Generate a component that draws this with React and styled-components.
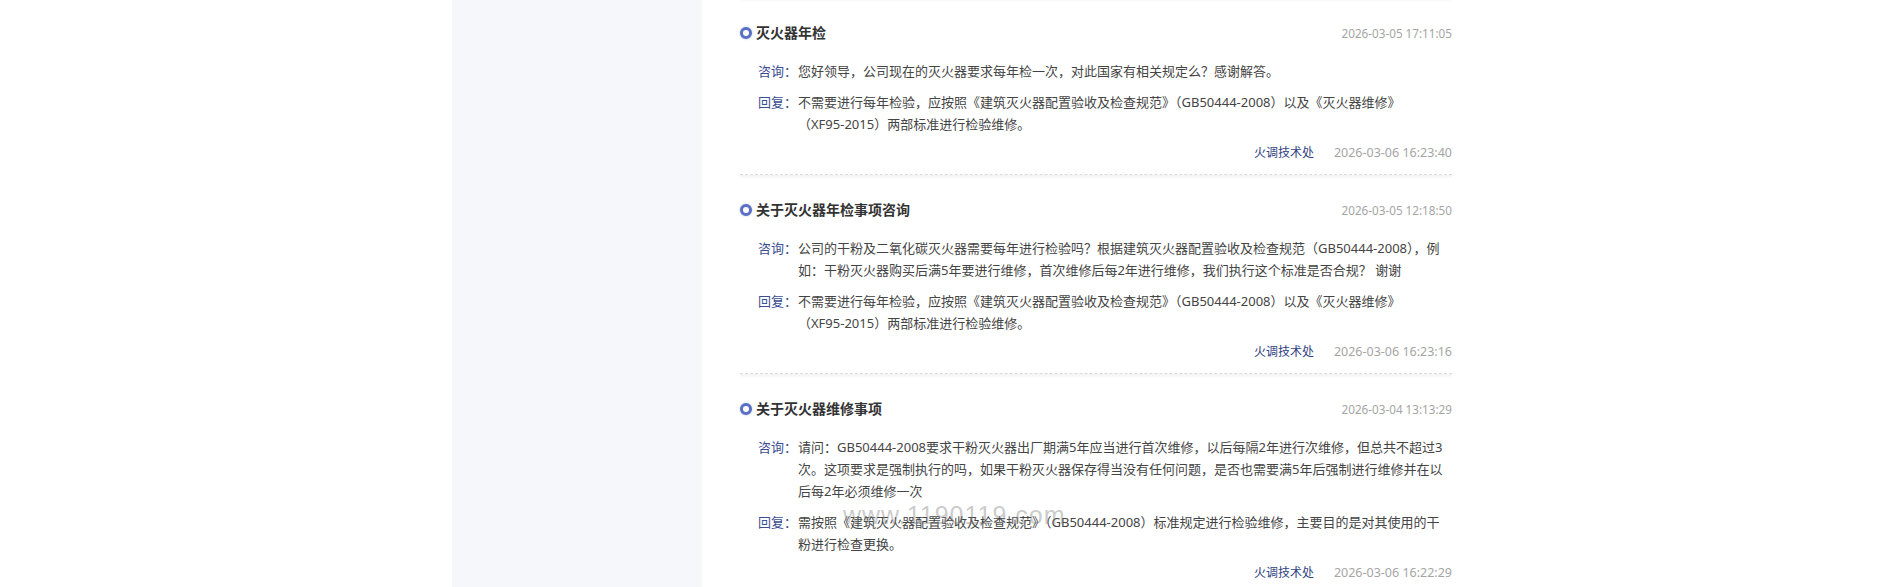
import React from 'react';
import styled, { createGlobalStyle } from 'styled-components';

const GlobalStyle = createGlobalStyle`
  html, body {
    margin: 0;
    padding: 0;
    background: #fff;
    font-family: "Noto Sans", "Noto Sans CJK SC", sans-serif;
  }
`;

const Page = styled.div`
  display: flex;
  min-height: 587px;
  height: 100vh;
  overflow: hidden;
`;

const Blank = styled.div`
  width: 452px;
  flex: none;
`;

const Sidebar = styled.aside`
  width: 250px;
  flex: none;
  background: #f5f7fa;
`;

const Main = styled.main`
  width: 712px;
  flex: none;
  padding-left: 38px;
`;

const List = styled.div`
  margin-top: -3px;
`;

const Item = styled.section`
  position: relative;
  border-top: 1px dashed #dcdcdc;
  background: linear-gradient(#f2f2f2, #fff 4px);
  padding: 24px 0 10px;
`;

const Header = styled.div`
  display: flex;
  justify-content: space-between;
  align-items: center;
  line-height: 22px;
`;

const Title = styled.h3`
  display: flex;
  align-items: center;
  margin: 0;
  font-size: 14px;
  font-weight: bold;
  color: #333;
`;

const Dot = styled.span`
  width: 6px;
  height: 6px;
  border: 3px solid #5b70c4;
  border-radius: 50%;
  background: #fff;
  box-shadow: 0 0 2px rgba(91, 112, 196, 0.5);
  margin-right: 4px;
`;

const Time = styled.span`
  font-size: ${(p) => (p.$reply ? '12.5px' : '11.7px')};
  color: #a5a5a5;
`;

const Body = styled.div`
  display: flex;
  flex-direction: column;
  gap: 9px;
  margin-top: 16px;
`;

const Row = styled.div`
  display: flex;
  padding-left: 18px;
  font-size: 13px;
  line-height: 22px;
`;

const Label = styled.span`
  width: 40px;
  flex: none;
  color: #3b4d93;
`;

const Text = styled.p`
  flex: 1;
  margin: 0;
  color: #444;
`;

const Footer = styled.div`
  display: flex;
  justify-content: flex-end;
  align-items: center;
  gap: 20px;
  margin-top: 7px;
  line-height: 22px;
`;

const Author = styled.span`
  font-size: 12px;
  color: #2f3f82;
`;

const Watermark = styled.span`
  position: absolute;
  left: 103px;
  top: 126px;
  font-family: "Liberation Sans", Arial, sans-serif;
  font-size: 25px;
  line-height: 30px;
  letter-spacing: 1px;
  color: rgba(120, 120, 120, 0.4);
  pointer-events: none;
`;

const items = [
  {
    title: '灭火器年检',
    time: '2026-03-05 17:11:05',
    ask: ['您好领导，公司现在的灭火器要求每年检一次，对此国家有相关规定么？感谢解答。'],
    reply: [
      '不需要进行每年检验，应按照《建筑灭火器配置验收及检查规范》（GB50444-2008）以及《灭火器维修》',
      '（XF95-2015）两部标准进行检验维修。',
    ],
    replyTime: '2026-03-06 16:23:40',
  },
  {
    title: '关于灭火器年检事项咨询',
    time: '2026-03-05 12:18:50',
    ask: [
      '公司的干粉及二氧化碳灭火器需要每年进行检验吗？根据建筑灭火器配置验收及检查规范（GB50444-2008），例',
      '如：干粉灭火器购买后满5年要进行维修，首次维修后每2年进行维修，我们执行这个标准是否合规？ 谢谢',
    ],
    reply: [
      '不需要进行每年检验，应按照《建筑灭火器配置验收及检查规范》（GB50444-2008）以及《灭火器维修》',
      '（XF95-2015）两部标准进行检验维修。',
    ],
    replyTime: '2026-03-06 16:23:16',
  },
  {
    title: '关于灭火器维修事项',
    time: '2026-03-04 13:13:29',
    ask: [
      '请问：GB50444-2008要求干粉灭火器出厂期满5年应当进行首次维修，以后每隔2年进行次维修，但总共不超过3',
      '次。这项要求是强制执行的吗，如果干粉灭火器保存得当没有任何问题，是否也需要满5年后强制进行维修并在以',
      '后每2年必须维修一次',
    ],
    reply: [
      '需按照《建筑灭火器配置验收及检查规范》（GB50444-2008）标准规定进行检验维修，主要目的是对其使用的干',
      '粉进行检查更换。',
    ],
    replyTime: '2026-03-06 16:22:29',
    watermark: true,
  },
];

const Lines = ({ lines }) => (
  <Text>
    {lines.map((l, i) => (
      <React.Fragment key={i}>
        {i > 0 && <br />}
        {l}
      </React.Fragment>
    ))}
  </Text>
);

const App = () => {
  return (
    <Page>
      <GlobalStyle />
      <Blank />
      <Sidebar />
      <Main>
        <List>
          {items.map((it) => (
            <Item key={it.time}>
              <Header>
                <Title>
                  <Dot />
                  {it.title}
                </Title>
                <Time>{it.time}</Time>
              </Header>
              <Body>
                <Row>
                  <Label>咨询：</Label>
                  <Lines lines={it.ask} />
                </Row>
                <Row>
                  <Label>回复：</Label>
                  <Lines lines={it.reply} />
                </Row>
              </Body>
              <Footer>
                <Author>火调技术处</Author>
                <Time $reply>{it.replyTime}</Time>
              </Footer>
              {it.watermark && <Watermark>www.1190119.com</Watermark>}
            </Item>
          ))}
        </List>
      </Main>
    </Page>
  );
};

export default App;
